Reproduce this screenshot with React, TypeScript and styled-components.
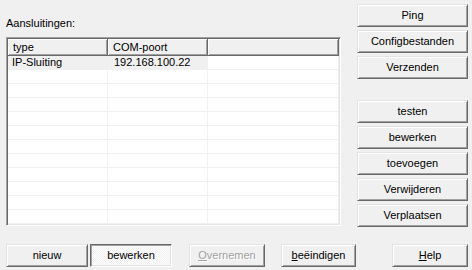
import React from "react";
import styled, { createGlobalStyle, css } from "styled-components";

const Global = createGlobalStyle`
  html, body { margin: 0; padding: 0; background: #f0f0f0; }
  body { font-family: "Liberation Sans", Arial, sans-serif; font-size: 11px; color: #000; }
`;

const Window = styled.div`
  width: 472px;
  height: 270px;
  box-sizing: border-box;
  padding: 4px 0 0 6px;
  display: grid;
  grid-template-columns: 335px 111px;
  grid-template-rows: auto auto;
  column-gap: 16px;
  overflow: hidden;
`;

const LeftPanel = styled.div`
  display: flex;
  flex-direction: column;
`;

const Label = styled.div`
  margin-top: 13px;
  line-height: 13px;
  height: 13px;
  margin-bottom: 7px;
`;

const Table = styled.div`
  width: 335px;
  height: 189px;
  box-sizing: border-box;
  background: #fff;
  border-style: solid;
  border-width: 1px;
  border-color: #a0a0a0 #fff #fff #a0a0a0;
  box-shadow: inset 1px 1px #696969, inset -1px -1px #e3e3e3;
  padding: 1px;
  display: flex;
  flex-direction: column;
  overflow: hidden;
`;

const Cols = "100px 100px 131px";

const HeaderRow = styled.div`
  display: grid;
  grid-template-columns: ${Cols};
  height: 17px;
  flex: none;
`;

const HeaderCell = styled.div`
  box-sizing: border-box;
  background: #f0f0f0;
  border-right: 1px solid #696969;
  border-bottom: 1px solid #696969;
  box-shadow: inset 1px 1px #fff, inset -1px -1px #a0a0a0;
  padding-left: 5px;
  line-height: 16px;
  white-space: nowrap;
`;

const Row = styled.div`
  display: grid;
  grid-template-columns: ${Cols};
  height: 14px;
  flex: none;
`;

const Cell = styled.div<{ $sel?: boolean; $pad?: number }>`
  box-sizing: border-box;
  border-right: 1px solid #f0f0f0;
  border-bottom: 1px solid #f0f0f0;
  background: ${(p) => (p.$sel ? "#f0f0f0" : "#fff")};
  padding-left: ${(p) => p.$pad ?? 6}px;
  line-height: 13px;
  white-space: nowrap;
`;

const RightPanel = styled.div`
  display: flex;
  flex-direction: column;
  gap: 3px;
`;

const raised = css`
  border-style: solid;
  border-width: 1px;
  border-color: #e3e3e3 #696969 #696969 #e3e3e3;
  box-shadow: inset 1px 1px #fff, inset -1px -1px #a0a0a0;
  background: #f0f0f0;
`;

const sunken = css`
  border-style: solid;
  border-width: 1px;
  border-color: #696969 #fff #fff #696969;
  box-shadow: inset 1px 1px #a0a0a0, inset -1px -1px #e3e3e3;
  background: repeating-conic-gradient(#fff 0 25%, #f0f0f0 0 50%) 0 0 / 2px 2px;
`;

const Button = styled.button<{ $w?: number; $ml?: number; $mt?: number; $pressed?: boolean; $disabled?: boolean }>`
  box-sizing: border-box;
  width: ${(p) => (p.$w ? `${p.$w}px` : "100%")};
  height: 23px;
  margin: ${(p) => p.$mt ?? 0}px 0 0 ${(p) => p.$ml ?? 0}px;
  padding: 0 0 1px;
  font-family: inherit;
  font-size: 11px;
  color: ${(p) => (p.$disabled ? "#a0a0a0" : "#000")};
  text-shadow: ${(p) => (p.$disabled ? "1px 1px #fff" : "none")};
  text-align: center;
  line-height: 20px;
  border-radius: 0;
  outline: none;
  flex: none;
  ${(p) => (p.$pressed ? sunken : raised)}
`;

const Ul = styled.span`
  text-decoration: underline;
  text-underline-offset: 1px;
`;

const BottomBar = styled.div`
  grid-column: 1 / span 2;
  display: flex;
  margin-top: 13px;
`;

export default function App() {
  const rows = Array.from({ length: 11 });
  return (
    <>
      <Global />
      <Window>
        <LeftPanel>
          <Label>Aansluitingen:</Label>
          <Table>
            <HeaderRow>
              <HeaderCell>type</HeaderCell>
              <HeaderCell>COM-poort</HeaderCell>
              <HeaderCell />
            </HeaderRow>
            <Row>
              <Cell $sel $pad={4}>IP-Sluiting</Cell>
              <Cell $sel>192.168.100.22</Cell>
              <Cell />
            </Row>
            {rows.map((_, i) => (
              <Row key={i}>
                <Cell />
                <Cell />
                <Cell />
              </Row>
            ))}
          </Table>
        </LeftPanel>
        <RightPanel>
          <Button>Ping</Button>
          <Button>Configbestanden</Button>
          <Button>Verzenden</Button>
          <Button $mt={18}>testen</Button>
          <Button>bewerken</Button>
          <Button>toevoegen</Button>
          <Button>Verwijderen</Button>
          <Button>Verplaatsen</Button>
        </RightPanel>
        <BottomBar>
          <Button $w={82}>nieuw</Button>
          <Button $w={82} $ml={2} $pressed>bewerken</Button>
          <Button $w={76} $ml={17} $disabled>
            <Ul>O</Ul>vernemen
          </Button>
          <Button $w={75} $ml={16}>
            <Ul>b</Ul>eëindigen
          </Button>
          <Button $w={76} $ml={36}>
            <Ul>H</Ul>elp
          </Button>
        </BottomBar>
      </Window>
    </>
  );
}
